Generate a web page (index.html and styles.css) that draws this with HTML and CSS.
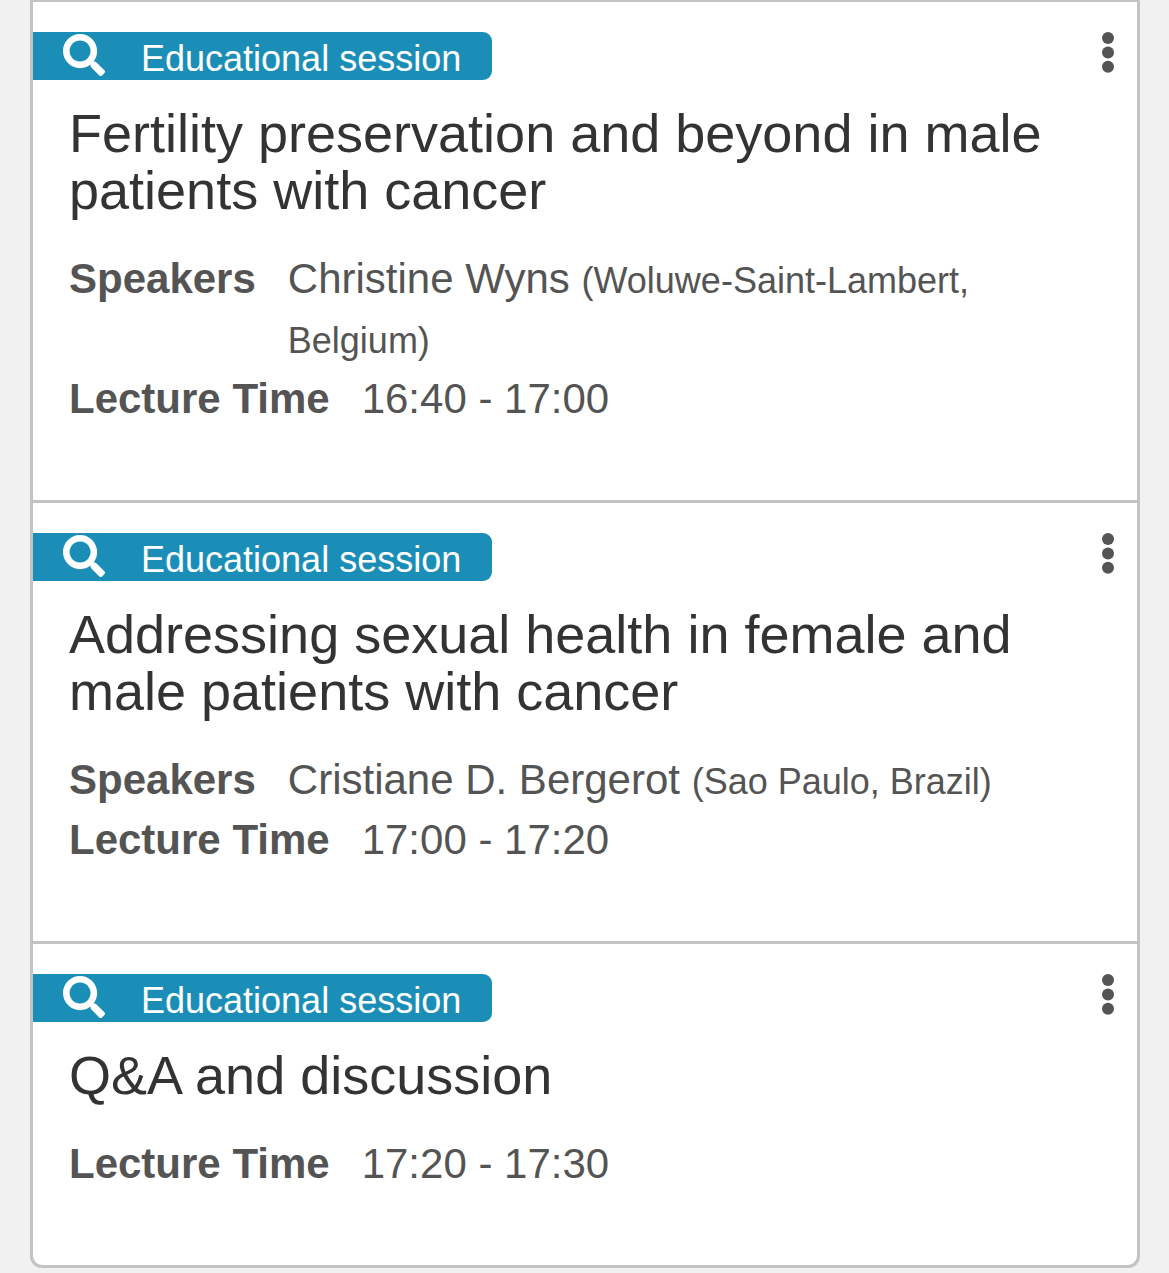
FILE: index.html
```
<!DOCTYPE html>
<html lang="en">
<head>
<meta charset="utf-8">
<meta name="viewport" content="width=device-width, initial-scale=1">
<title>Educational session programme</title>
<link rel="stylesheet" href="styles.css">
</head>
<body>
<svg class="sprite" aria-hidden="true">
  <symbol id="search" viewBox="0 0 512 512"><path fill="currentColor" d="M505 442.700L405.300 343c-4.500-4.500-10.600-7-17-7H372c27.600-35.300 44-79.700 44-128C416 93.100 322.900 0 208 0S0 93.100 0 208s93.100 208 208 208c48.300 0 92.700-16.400 128-44v16.300c0 6.400 2.500 12.500 7 17l99.700 99.700c9.400 9.400 24.600 9.400 33.900 0l28.300-28.300c9.400-9.400 9.400-24.600.1-34zM208 336c-70.700 0-128-57.200-128-128 0-70.700 57.200-128 128-128 70.700 0 128 57.200 128 128 0 70.700-57.200 128-128 128z"/></symbol>
  <symbol id="more" viewBox="0 0 12 42"><g fill="currentColor"><circle cx="6" cy="6" r="6"/><circle cx="6" cy="20.400" r="6"/><circle cx="6" cy="34.800" r="6"/></g></symbol>
</svg>
<main class="sessions">
  <article class="session">
    <header class="bar">
      <span class="tag"><svg class="tag-icon" aria-hidden="true"><use href="#search"/></svg>Educational session</span>
      <button class="menu" type="button" aria-label="More options"><svg class="menu-icon" aria-hidden="true"><use href="#more"/></svg></button>
    </header>
    <h2 class="title">Fertility preservation and beyond in male patients with cancer</h2>
    <dl class="details">
      <div class="row"><dt>Speakers</dt><dd>Christine Wyns <small>(Woluwe-Saint-Lambert, Belgium)</small></dd></div>
      <div class="row"><dt>Lecture Time</dt><dd>16:40 - 17:00</dd></div>
    </dl>
  </article>
  <article class="session">
    <header class="bar">
      <span class="tag"><svg class="tag-icon" aria-hidden="true"><use href="#search"/></svg>Educational session</span>
      <button class="menu" type="button" aria-label="More options"><svg class="menu-icon" aria-hidden="true"><use href="#more"/></svg></button>
    </header>
    <h2 class="title">Addressing sexual health in female and male patients with cancer</h2>
    <dl class="details">
      <div class="row"><dt>Speakers</dt><dd>Cristiane D. Bergerot <small>(Sao Paulo, Brazil)</small></dd></div>
      <div class="row"><dt>Lecture Time</dt><dd>17:00 - 17:20</dd></div>
    </dl>
  </article>
  <article class="session">
    <header class="bar">
      <span class="tag"><svg class="tag-icon" aria-hidden="true"><use href="#search"/></svg>Educational session</span>
      <button class="menu" type="button" aria-label="More options"><svg class="menu-icon" aria-hidden="true"><use href="#more"/></svg></button>
    </header>
    <h2 class="title">Q&amp;A and discussion</h2>
    <dl class="details">
      <div class="row"><dt>Lecture Time</dt><dd>17:20 - 17:30</dd></div>
    </dl>
  </article>
</main>
</body>
</html>
```
FILE: styles.css
```
* { box-sizing: border-box; }
body {
  margin: 0;
  background: #f1f1f1;
  color: #545454;
  font-family: "Liberation Sans", Arial, sans-serif;
  font-size: 42px;
  line-height: 60px;
}
.sprite { display: none; }
.sessions {
  margin: 0 29px 5px 30px;
  background: #fff;
  border: 3px solid #c3c3c3;
  border-top: 0;
  border-radius: 0 0 12px 12px;
}
.session {
  border-top: 3px solid #c3c3c3;
  padding: 30px 0 71px;
}
.session:first-child { border-top-width: 2px; }
.bar {
  display: flex;
  justify-content: space-between;
  align-items: flex-start;
  height: 48px;
  padding-right: 18px;
}
.tag {
  display: flex;
  align-items: center;
  height: 48px;
  padding: 6px 31px 0 30px;
  background: #1b8eb7;
  border-radius: 0 9px 9px 0;
  color: #fff;
  font-size: 36px;
  line-height: 42px;
}
.tag-icon {
  width: 42px;
  height: 42px;
  margin: 0 36px 8px 0;
}
.menu {
  padding: 0 5px;
  border: 0;
  background: none;
  color: #545454;
}
.menu-icon {
  display: block;
  width: 12px;
  height: 42px;
}
.title {
  margin: 25px 36px 30px;
  color: #333;
  font-size: 54px;
  font-weight: 400;
  line-height: 57px;
}
.details { margin: 0 36px; }
.row { display: flex; }
.row dt {
  flex: none;
  margin-right: 32px;
  font-weight: 700;
}
.row dd { margin: 0; }
.row small {
  font-size: 36px;
  line-height: 36px;
}
```
